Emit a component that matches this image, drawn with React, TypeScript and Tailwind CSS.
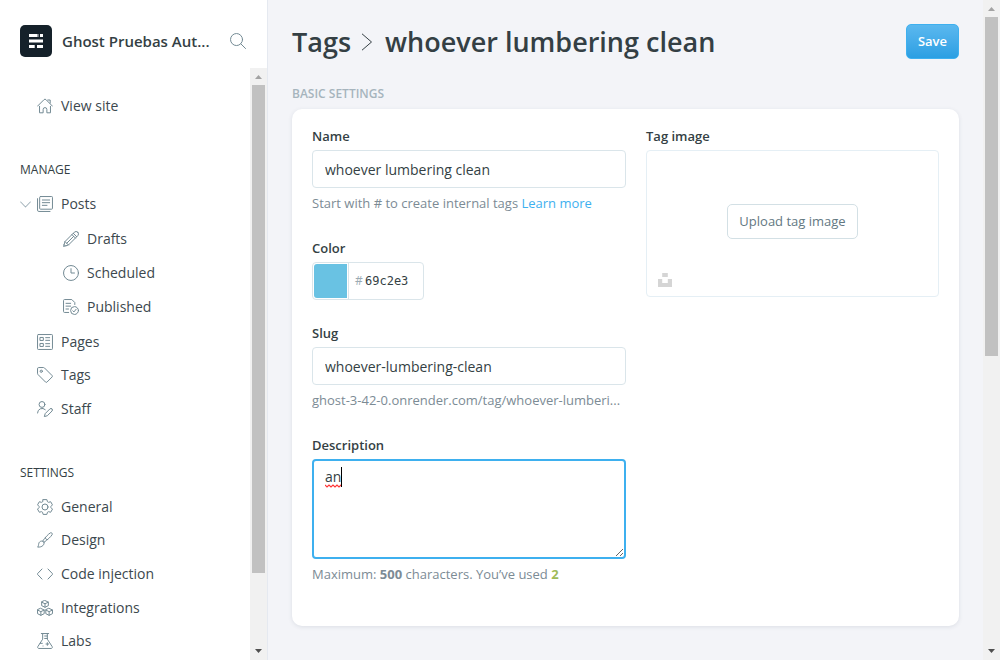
import { useState } from 'react';
import type { ReactNode } from 'react';

function Icon({ children, className = 'size-4' }: { children: ReactNode; className?: string }) {
  return (
    <svg
      viewBox="0 0 24 24"
      className={`${className} shrink-0`}
      fill="none"
      stroke="currentColor"
      strokeWidth="1.5"
      strokeLinecap="round"
      strokeLinejoin="round"
      aria-hidden="true"
    >
      {children}
    </svg>
  );
}

const icons = {
  house: (
    <Icon>
      <path d="M.8 12.2 10.6 2.4a2 2 0 0 1 2.8 0l9.8 9.8" />
      <path d="M3.8 12.5v9.7h5.4v-5a2.8 2.8 0 0 1 5.6 0v5h5.4v-9.7" />
      <path d="M16.2 3h3.6v4.6" />
    </Icon>
  ),
  posts: (
    <Icon>
      <rect x="4" y=".8" width="19.2" height="19" rx="1.2" />
      <path d="M19.5 23.2H2.8a2 2 0 0 1-2-2V4M8 6h11M8 10h11M8 14h7" />
    </Icon>
  ),
  pencil: (
    <Icon>
      <path d="M22.2 1.8a3.7 3.7 0 0 0-5.2 0L3 15.8.8 23.2 8.2 21l14-14a3.7 3.7 0 0 0 0-5.2z" />
      <path d="m15.4 3.4 5.2 5.2M13.4 5.4l5.2 5.2M3 15.8 8.2 21M16 8 5.6 18.4M1.6 20.4l2 2" />
    </Icon>
  ),
  clock: (
    <Icon>
      <circle cx="12" cy="12" r="11.2" />
      <path d="M12 5.5V12h5.2" />
    </Icon>
  ),
  published: (
    <Icon>
      <path d="M8.5 20.2H2.3A1.5 1.5 0 0 1 .8 18.7V2.3A1.5 1.5 0 0 1 2.3.8h10.9l4.5 4.5v3" />
      <path d="M4.5 6.5h7M4.5 10.7h7M4.5 15h3.8" />
      <circle cx="17.3" cy="17.3" r="5.9" />
      <path d="m14.7 17.7 1.7 1.7 3.3-4" />
    </Icon>
  ),
  pages: (
    <Icon>
      <rect x=".8" y=".8" width="22.4" height="22.4" rx="1.2" />
      <path d="M5 5.2h4.5v4.5H5zM5 14.2h4.5v4.5H5zM13 5.5h6M13 9.5h6M13 14.5h6M13 18.5h6" />
    </Icon>
  ),
  tag: (
    <Icon>
      <path d="M.8 2.3A1.5 1.5 0 0 1 2.3.8h7.5a2 2 0 0 1 1.4.6l11.4 11.4a1.6 1.6 0 0 1 0 2.2l-7.6 7.6a1.6 1.6 0 0 1-2.2 0L1.4 11.2a2 2 0 0 1-.6-1.4z" />
      <circle cx="6.4" cy="6.4" r="1.7" />
    </Icon>
  ),
  staff: (
    <Icon>
      <circle cx="7.5" cy="5.2" r="4.4" />
      <path d="M.8 18a6.9 6.9 0 0 1 11.6-5" />
      <path d="M22.5 11.9a2.2 2.2 0 0 0-3.2 0l-7 7-1.3 4.5 4.5-1.3 7-7a2.2 2.2 0 0 0 0-3.2z" />
    </Icon>
  ),
  cog: (
    <Icon>
      <circle cx="12" cy="12" r="4.5" />
      <path d="M9.2.9h5.6l.9 3.2 1.6.9 3.200-.9 2.700 4.700-2.300 2.300v1.800l2.300 2.300-2.700 4.700-3.200-.9-1.600.9-.9 3.200H9.200l-.9-3.200-1.600-.9-3.200.9-2.700-4.700 2.300-2.300v-1.800L.8 8.800l2.700-4.700 3.200.9 1.600-.9z" />
    </Icon>
  ),
  brush: (
    <Icon>
      <path d="M8.8 13.2C12.5 8 16.5 3.6 20 1.3a2 2 0 0 1 2.7 2.7c-2.3 3.5-6.7 7.5-11.9 11.2z" />
      <path d="M10.5 15.3c1.2 3.5-2.5 7.9-9.7 7.3 1.8-1.3 1.2-3.3 2-5.8.9-2.8 4.5-4.4 6.5-2.4z" />
      <path d="m12.5 9.2 2.5 2.5" />
    </Icon>
  ),
  code: (
    <Icon>
      <path d="M7.5 4.5.8 11.5a.9.9 0 0 0 0 1.1l6.7 7M16.5 4.5l6.7 7a.9.9 0 0 1 0 1.1l-6.7 7" />
    </Icon>
  ),
  integrations: (
    <Icon>
      <path d="m12 .8 5 2.4v5.3l-5 2.4-5-2.4V3.2zM7 3.2l5 2.5 5-2.5M12 5.7v5.2" />
      <path d="m5.8 12.6 5 2.4v5.5l-5 2.5-5-2.5V15zM.8 15l5 2.5 5-2.5M5.8 17.5V23" />
      <path d="m18.2 12.6 5 2.4v5.5l-5 2.5-5-2.5V15zM13.2 15l5 2.5 5-2.5M18.2 17.5V23" />
    </Icon>
  ),
  labs: (
    <Icon>
      <path d="M6.5.8h11M8.5.8v8.5L1.2 20.5a1.8 1.8 0 0 0 1.5 2.7h18.6a1.8 1.8 0 0 0 1.5-2.7L15.5 9.3V.8M11.5 4.5h4M11.5 8.2h4M4.6 15.5h3.4" />
      <path d="M15.5 14.5v4M13.5 16.5h4M9 19.5h.1" />
    </Icon>
  ),
};

function NavLink({ icon, children }: { icon: ReactNode; children: ReactNode }) {
  return (
    <a href="#" className="flex h-full items-center gap-2 text-[#738a94] hover:text-[#15171a]">
      {icon}
      <span className="text-sm text-[#3c484e]">{children}</span>
    </a>
  );
}

function Arrow({ down = false, className }: { down?: boolean; className: string }) {
  return (
    <svg viewBox="0 0 17 17" className={`size-[17px] shrink-0 ${className}`} fill="currentColor" aria-hidden="true">
      {down ? <path d="M5 6h7L8.5 10z" /> : <path d="M5 11h7L8.5 7z" />}
    </svg>
  );
}

function ScrollTrack({ thumb }: { thumb: string }) {
  return (
    <div className="flex w-[17px] shrink-0 flex-col bg-[#f1f1f1]" aria-hidden="true">
      <Arrow className="text-[#a3a3a3]" />
      <div className="min-h-0 flex-1 px-0.5">
        <div className={`${thumb} bg-[#c1c1c1]`} />
      </div>
      <Arrow down className="text-[#505050]" />
    </div>
  );
}

const sectionClass = 'mt-[38px] mb-2 text-xs leading-[18px] text-[#343f44]';

function Sidebar() {
  return (
    <aside className="flex w-[268px] shrink-0 flex-col border-r border-[#e5e9f0] bg-white">
      <header className="flex h-[68px] shrink-0 items-center pt-3.5 pr-[21px] pl-5">
        <svg viewBox="0 0 32 32" className="size-8 shrink-0" aria-hidden="true">
          <rect width="32" height="32" rx="5" fill="#15212a" />
          <path fill="#fff" d="M9 9h8.5v3H9zM20 9h3v3h-3zM9 14.5h14v3H9zM9 20h5.7v3H9zM17 20h6v3h-6z" />
          <path fill="#fff" opacity=".4" d="M17.5 9h1.5v3h-1.5z" />
        </svg>
        <span className="ml-2.5 flex-1 text-[15px] font-semibold whitespace-nowrap text-[#343f44]">
          Ghost Pruebas Aut...
        </span>
        <button type="button" aria-label="Search" className="text-[#738a94]">
          <Icon>
            <circle cx="9.8" cy="9.8" r="9" />
            <path d="m16.3 16.3 7 7" />
          </Icon>
        </button>
      </header>
      <div className="flex min-h-0 flex-1">
        <nav className="min-w-0 flex-1 overflow-hidden pt-[21px] pl-5">
          <div className="h-[34px] pl-[17px]">
            <NavLink icon={icons.house}>View site</NavLink>
          </div>
          <h2 className={sectionClass}>MANAGE</h2>
          <div className="flex h-[34px] items-center">
            <button type="button" aria-label="Collapse posts" className="w-[17px] text-[#a2b2ba]">
              <Icon className="size-[11px]">
                <path strokeWidth="2.2" d="m1.5 6.5 10.5 11L22.5 6.5" />
              </Icon>
            </button>
            <NavLink icon={icons.posts}>Posts</NavLink>
          </div>
          <ul className="mt-px grid h-[102px] auto-rows-fr pl-[43px]">
            <li><NavLink icon={icons.pencil}>Drafts</NavLink></li>
            <li><NavLink icon={icons.clock}>Scheduled</NavLink></li>
            <li><NavLink icon={icons.published}>Published</NavLink></li>
          </ul>
          <ul className="mt-px grid h-[101px] auto-rows-fr pl-[17px]">
            <li><NavLink icon={icons.pages}>Pages</NavLink></li>
            <li><NavLink icon={icons.tag}>Tags</NavLink></li>
            <li><NavLink icon={icons.staff}>Staff</NavLink></li>
          </ul>
          <h2 className={sectionClass}>SETTINGS</h2>
          <ul className="grid h-[168px] auto-rows-fr pl-[17px]">
            <li><NavLink icon={icons.cog}>General</NavLink></li>
            <li><NavLink icon={icons.brush}>Design</NavLink></li>
            <li><NavLink icon={icons.code}>Code injection</NavLink></li>
            <li><NavLink icon={icons.integrations}>Integrations</NavLink></li>
            <li><NavLink icon={icons.labs}>Labs</NavLink></li>
          </ul>
        </nav>
        <ScrollTrack thumb="h-[87.5%]" />
      </div>
    </aside>
  );
}

const labelClass = 'block text-[13px] leading-7 font-semibold text-[#343f44]';
const inputClass =
  'block h-[38px] w-full rounded border border-[#dae5ea] bg-white px-3 text-sm text-[#343f44] outline-none';
const hintClass = 'h-[30px] truncate text-[13px] leading-[30px] text-[#7c8b95]';

export default function App() {
  const [name, setName] = useState('whoever lumbering clean');
  const [slug, setSlug] = useState('whoever-lumbering-clean');
  const [color, setColor] = useState('69c2e3');
  const [description, setDescription] = useState('an');

  return (
    <div className="flex h-screen overflow-hidden bg-[#f3f4f8] font-['Open_Sans','Noto_Sans',sans-serif]">
      <Sidebar />
      <main className="min-w-0 flex-1 overflow-hidden px-6 pt-6">
        <header className="flex h-[35px] items-center justify-between">
          <h1 className="flex items-center text-[27px] leading-[35px] font-semibold text-[#343f44]">
            <a href="#">Tags</a>
            <svg viewBox="0 0 12 18" className="mr-3 ml-2.5 h-[18px] w-3" fill="none" stroke="currentColor" aria-hidden="true">
              <path d="m1 .8 9.5 8.2L1 17.2" />
            </svg>
            <span>whoever lumbering clean</span>
          </h1>
          <button
            type="button"
            className="h-[35px] rounded-[5px] border border-[#3eb0ef] bg-linear-to-b from-[#5ab8ef] to-[#2a9fe3] px-[11px] text-[13px] font-semibold text-white"
          >
            Save
          </button>
        </header>
        <h2 className="mt-[26px] mb-1.5 text-xs leading-[18px] font-semibold text-[#a6b4bd]">BASIC SETTINGS</h2>
        <form className="grid grid-cols-[314fr_293fr] gap-5 rounded-[10px] bg-white px-5 pt-[13px] pb-[37px] shadow-[0_1px_4px_rgba(60,70,100,0.12)]">
          <div className="min-w-0">
            <label htmlFor="name" className={labelClass}>Name</label>
            <input id="name" className={inputClass} value={name} onChange={(e) => setName(e.target.value)} />
            <p className={hintClass}>
              Start with # to create internal tags <a href="#" className="text-[#3eb0ef]">Learn more</a>
            </p>

            <label htmlFor="color" className={`${labelClass} mt-4`}>Color</label>
            <div className="flex h-[38px] w-28 items-center rounded border border-[#dae5ea]">
              <div className="h-full w-9 shrink-0 border-r border-[#dae5ea] p-px">
                <div className="h-full rounded-l-[3px] bg-[#69c2e3]" />
              </div>
              <span className="ml-1.5 w-2.5 text-xs text-[#9aaab3]">#</span>
              <input
                id="color"
                className="w-14 min-w-0 bg-transparent font-['DejaVu_Sans_Mono',monospace] text-xs text-[#343f44] outline-none"
                value={color}
                onChange={(e) => setColor(e.target.value)}
              />
            </div>

            <label htmlFor="slug" className={`${labelClass} mt-[19px]`}>Slug</label>
            <input id="slug" className={inputClass} value={slug} onChange={(e) => setSlug(e.target.value)} />
            <p className={hintClass}>ghost-3-42-0.onrender.com/tag/whoever-lumberi...</p>

            <label htmlFor="description" className={`${labelClass} mt-4`}>Description</label>
            <div className="relative">
              <textarea
                id="description"
                className="block h-[100px] w-full resize rounded border-2 border-[#3eb0ef] bg-white px-[11px] py-1 text-sm leading-6 text-[#343f44] outline-none"
                value={description}
                onChange={(e) => setDescription(e.target.value)}
              />
              <svg viewBox="0 0 17 4" className="absolute top-[25px] left-[13px] h-1 w-[17px]" fill="none" stroke="#f33" strokeWidth="1.2" aria-hidden="true">
                <path d="m0 1 2 2 2-2 2 2 2-2 2 2 2-2 2 2 2-2 1 1" />
              </svg>
              <span className="absolute top-2 left-[29px] h-5 w-px bg-black" aria-hidden="true" />
            </div>
            <p className={hintClass}>
              Maximum: <b>500</b> characters. You’ve used <b className="text-[#9fbb58]">2</b>
            </p>
          </div>

          <div className="min-w-0">
            <label htmlFor="upload" className={labelClass}>Tag image</label>
            <div className="relative flex h-[147px] items-center justify-center rounded border border-[#e5eff5] pb-1">
              <button
                id="upload"
                type="button"
                className="h-[35px] rounded-[5px] border border-[#d3e0e5] px-[11px] text-[13px] text-[#637882]"
              >
                Upload tag image
              </button>
              <svg viewBox="0 0 14 14" className="absolute bottom-[9px] left-[11px] size-3.5" fill="#d5d5d5" aria-hidden="true">
                <path d="M4.2 0h5.6v4H4.2zM0 6h4.2v4h5.6V6H14v8H0z" />
              </svg>
            </div>
          </div>
        </form>
      </main>
      <ScrollTrack thumb="h-[54.2%]" />
    </div>
  );
}
